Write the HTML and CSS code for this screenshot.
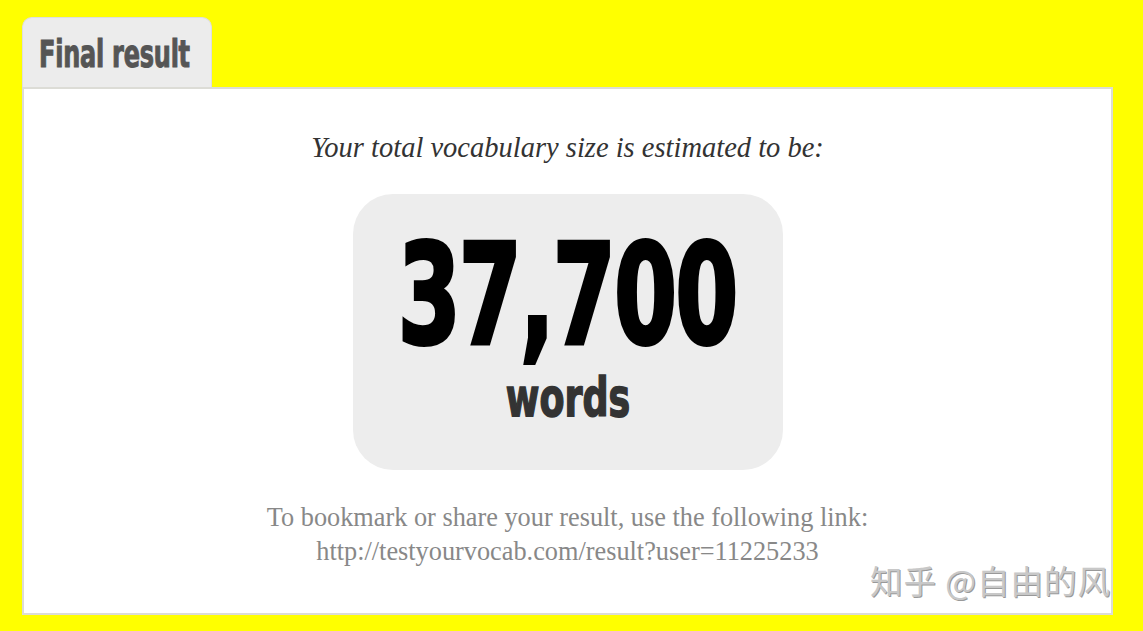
FILE: index.html
```html
<!DOCTYPE html>
<html>
<head>
<meta charset="utf-8">
<link rel="stylesheet" href="styles.css">
</head>
<body>
<div class="page">
  <div class="tab"><span class="tab-title">Final result</span></div>
  <div class="panel">
    <p class="lead">Your total vocabulary size is estimated to be:</p>
    <div class="result-box">
      <div class="number"><span class="num-inner">37,700</span></div>
      <div class="unit"><span class="unit-inner">words</span></div>
    </div>
    <p class="share">To bookmark or share your result, use the following link:<br>http://testyourvocab.com/result?user=11225233</p>
    <div class="watermark">知乎 @自由的风</div>
  </div>
</div>
</body>
</html>
```
FILE: styles.css
```css
html, body {
  margin: 0;
  padding: 0;
  background: #ffff00;
}
.page {
  padding: 17px 0 0 22px;
  width: 1091px;
}
.tab {
  width: 190px;
  height: 70px;
  background: #ececec;
  border: 1px solid #dedede;
  border-bottom: none;
  border-radius: 10px 10px 0 0;
  display: flex;
  align-items: center;
  padding: 4px 0 0 16px;
  box-sizing: border-box;
  white-space: nowrap;
}
.tab-title {
  font-family: "DejaVu Sans", sans-serif;
  font-stretch: condensed;
  font-weight: bold;
  font-size: 37px;
  color: #555;
  display: inline-block;
  transform: scaleX(0.72);
  transform-origin: left center;
  -webkit-text-stroke: 1px #555;
  letter-spacing: -0.3px;
}
.panel {
  position: relative;
  box-sizing: border-box;
  height: 528px;
  background: #fff;
  border: 2px solid #dcdcd6;
  display: flex;
  flex-direction: column;
  align-items: center;
}
.lead {
  margin: 43px 0 0;
  font-family: "Liberation Serif", serif;
  font-style: italic;
  font-size: 28.5px;
  color: #333;
  line-height: 32px;
}
.result-box {
  margin-top: 30px;
  width: 430px;
  height: 276px;
  background: #ededed;
  border-radius: 40px;
  display: flex;
  flex-direction: column;
  align-items: center;
}
.number {
  margin-top: 31px;
  height: 140px;
  line-height: 140px;
  font-family: "DejaVu Sans", sans-serif;
  font-stretch: condensed;
  font-weight: bold;
  font-size: 139px;
  color: #000;
  white-space: nowrap;
}
.num-inner {
  display: inline-block;
  transform: scaleX(0.72);
  letter-spacing: -2px;
  -webkit-text-stroke: 4px #000;
}
.unit {
  margin-top: 3px;
  height: 60px;
  line-height: 60px;
  font-family: "DejaVu Sans", sans-serif;
  font-stretch: condensed;
  font-weight: bold;
  font-size: 54px;
  color: #333;
}
.unit-inner {
  display: inline-block;
  transform: scaleX(0.75);
  -webkit-text-stroke: 1.5px #333;
}
.share {
  margin: 31px 0 0;
  font-family: "Liberation Serif", serif;
  font-size: 26.3px;
  line-height: 34px;
  color: #888;
  text-align: center;
}
.watermark {
  position: absolute;
  right: 0;
  bottom: 10px;
  font-family: "Noto Sans CJK SC", sans-serif;
  font-size: 32.5px;
  color: #c8c8c8;
  text-shadow: 1px 1px 0 #999;
  letter-spacing: 1px;
}
```
